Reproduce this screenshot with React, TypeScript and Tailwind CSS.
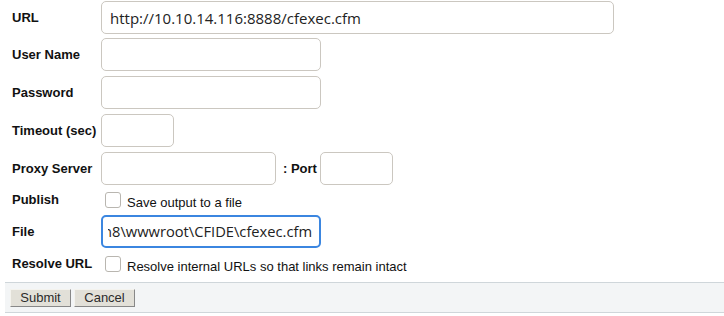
import { ReactNode } from 'react'

const labelCls = "w-[101px] shrink-0 pl-3 text-[13px] font-bold text-[#111] [font-family:'Liberation_Sans',Arial,sans-serif]"
const inputCls =
  "h-[33px] rounded-[5px] border border-[#cbc7c0] bg-white px-2 text-[15px] text-[#222] outline-none [font-family:'Open_Sans','Noto_Sans',sans-serif]"
const btnCls =
  "h-[18px] w-[61px] border border-b-[#888] border-l-[#f4f3ee] border-r-[#888] border-t-[#f4f3ee] bg-[#e2e0d8] text-[13px] leading-none text-[#2b2b2b] [font-family:'Liberation_Sans',Arial,sans-serif]"

function Row({ label, children, className = '' }: { label: string; children: ReactNode; className?: string }) {
  return (
    <div className={`flex items-center ${className}`}>
      <div className={labelCls}>{label}</div>
      {children}
    </div>
  )
}

function Check({ text }: { text: string }) {
  return (
    <label className="flex items-center gap-[6px] pl-[4px]">
      <span className="h-4 w-4 shrink-0 rounded-[3px] border border-[#b9b6b0] bg-white" />
      <span className="mt-[5px] whitespace-nowrap text-[13px] text-[#111] [font-family:'Liberation_Sans',Arial,sans-serif]">
        {text}
      </span>
    </label>
  )
}

export default function App() {
  return (
    <div className="h-[316px] w-[724px] overflow-hidden bg-white">
      <form className="flex flex-col pt-px">
        <Row label="URL">
          <input className={`${inputCls} w-[513px]`} defaultValue="http://10.10.14.116:8888/cfexec.cfm" />
        </Row>
        <Row label="User Name" className="mt-[4px]">
          <input className={`${inputCls} w-[220px]`} />
        </Row>
        <Row label="Password" className="mt-[5px]">
          <input className={`${inputCls} w-[220px]`} />
        </Row>
        <Row label="Timeout (sec)" className="mt-[5px]">
          <input className={`${inputCls} w-[73px]`} />
        </Row>
        <Row label="Proxy Server" className="mt-[5px]">
          <input className={`${inputCls} w-[175px]`} />
          <span className="ml-[7px] mr-[3px] text-[13px] font-bold text-[#111] [font-family:'Liberation_Sans',Arial,sans-serif]">
            : Port
          </span>
          <input className={`${inputCls} w-[73px]`} />
        </Row>
        <Row label="Publish" className="h-[30px]">
          <Check text="Save output to a file" />
        </Row>
        <Row label="File">
          {/* focused field, scrolled to the end of its value */}
          <div className="h-[33px] w-[220px] rounded-[5px] border-2 border-[#3b86e0] bg-white pl-[5px] pr-[7px]">
            <div className="flex h-full items-center justify-end overflow-hidden whitespace-nowrap text-[14.7px] text-[#222] [font-family:'Open_Sans','Noto_Sans',sans-serif]">
              <span>C:\ColdFusion8\wwwroot\CFIDE\cfexec.cfm</span>
            </div>
          </div>
        </Row>
        <Row label="Resolve URL" className="h-[32px]">
          <Check text="Resolve internal URLs so that links remain intact" />
        </Row>
        <div className="ml-[5px] mt-[2px] flex h-[31px] items-center gap-[3px] border-y border-[#cfd6da] bg-[#f3f5f6] pl-[5px]">
          <button type="button" className={btnCls}>
            Submit
          </button>
          <button type="button" className={btnCls}>
            Cancel
          </button>
        </div>
      </form>
    </div>
  )
}
